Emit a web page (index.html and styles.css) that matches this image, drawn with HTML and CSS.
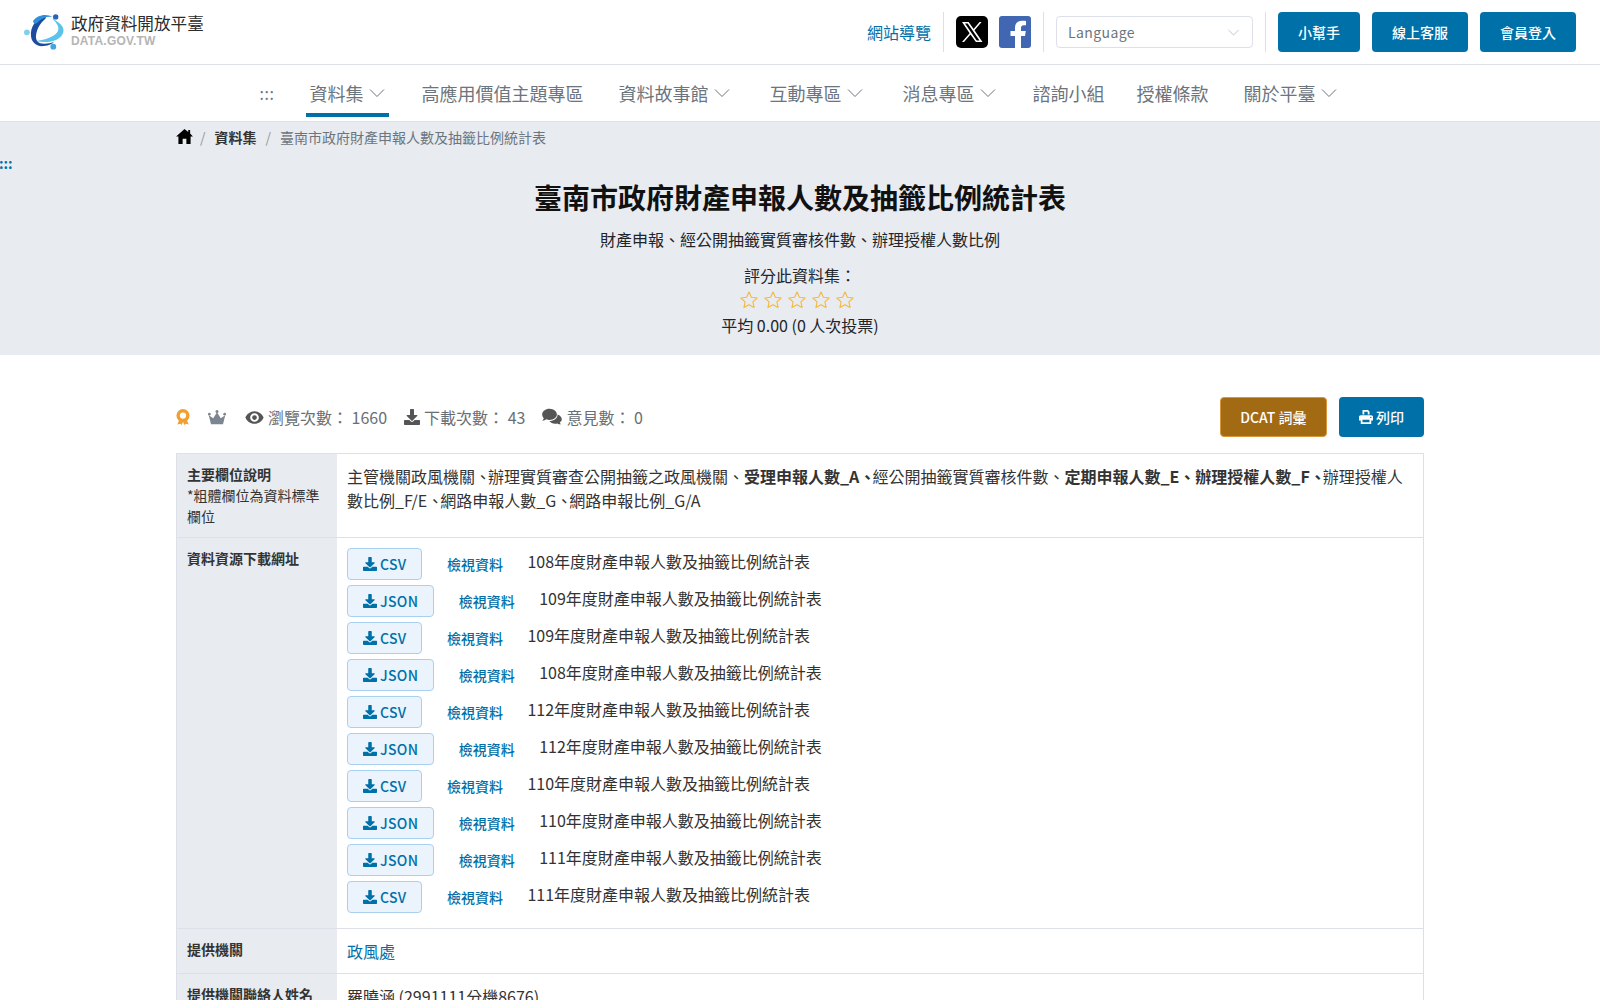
FILE: index.html
```html
<!DOCTYPE html>
<html lang="zh-TW">
<head>
  <meta charset="UTF-8" />
  <meta name="viewport" content="width=device-width, initial-scale=1.0"/>
  <title>臺南市政府財產申報人數及抽籤比例統計表 - 政府資料開放平臺</title>
  <link rel="stylesheet" href="styles.css">
</head>
<body>
  <svg class="icon-defs" width="0" height="0" aria-hidden="true">
    <symbol id="i-download" viewBox="0 0 512 512"><path d="M216 0h80c13 0 24 11 24 24v168h88c18 0 27 21 14 34L270 378c-8 8-20 8-28 0L90 226c-13-13-4-34 14-34h88V24c0-13 11-24 24-24zm296 376v112c0 13-11 24-24 24H24c-13 0-24-11-24-24V376c0-13 11-24 24-24h147l49 49c20 20 52 20 72 0l49-49h147c13 0 24 11 24 24z"/></symbol>
    <symbol id="i-chevron" viewBox="0 0 18 18"><path d="M2 5.500 9 12.500 16 5.500" fill="none" stroke="currentColor" stroke-width="1"/></symbol>
    <symbol id="i-star" viewBox="0 0 24 24"><path d="m12 2.500 2.900 6.300 6.900.8-5.100 4.700 1.400 6.800-6.100-3.400-6.100 3.400 1.400-6.800-5.100-4.700 6.900-.8z" fill="none" stroke="#f5b93a" stroke-width="1.300" stroke-linejoin="round"/></symbol>
  </svg>

  <header class="topbar">
    <a class="logo" href="#">
      <svg class="logo-mark" viewBox="0 0 42 38" width="42" height="38">
        <path d="M11 27C24 30 38 27 39.500 17 40 12 35 8 28 4.500 33 9 35.500 13 34 17 32 22 22 26 11 27z" fill="#5cc4ea"/>
        <path d="M20 1.500C12 5 6 13 7 22c.5 6 5 11 13 10 5-.5 8-2 10-4-6 2-14 3-17-1-3-5 1-16 7-21 2-1.500 3-3 0-4.500z" fill="#1c4c9e"/>
        <path d="M9 7c4-6 13-8 20-4-6-1-11 1-15 5-2 2-4 3-5-1z" fill="#2f8fd8"/>
        <circle cx="31.700" cy="2.900" r="2.700" fill="#2a62b5"/>
        <circle cx="2.900" cy="18.300" r="2.900" fill="#7fd0ee"/>
        <circle cx="29.300" cy="32.700" r="2.900" fill="#3fa6e0"/>
      </svg>
      <span class="logo-text">
        <span class="logo-name">政府資料開放平臺</span>
        <span class="logo-url">DATA.GOV.TW</span>
      </span>
    </a>
    <div class="topbar-right">
      <a class="sitemap" href="#">網站導覽</a>
      <span class="divider"></span>
      <a class="social" href="#" aria-label="X">
        <svg viewBox="0 0 32 32" width="32" height="32"><rect width="32" height="32" rx="5" fill="#000"/><path d="M6 6h6.600l5 7 6-7h2l-7.100 8.300L26.500 26h-6.600l-5.400-7.600L8 26H6l7.600-8.800zm3 1.500 11.700 17h2.800L11.700 7.500z" fill="#fff"/></svg>
      </a>
      <a class="social" href="#" aria-label="Facebook">
        <svg viewBox="0 0 32 32" width="32" height="32"><rect width="32" height="32" rx="3" fill="#4267b2"/><path d="M22 32V20h4l.8-5H22v-3c0-1.500.7-2.700 2.900-2.700H27V5c-1-.2-2.500-.3-4-.3-4.200 0-7 2.500-7 7V15h-4.500v5H16v12z" fill="#fff"/></svg>
      </a>
      <span class="divider"></span>
      <div class="lang-select">
        <span>Language</span>
        <svg width="13" height="13"><use href="#i-chevron"/></svg>
      </div>
      <span class="divider"></span>
      <div class="top-buttons">
        <a class="btn-primary" href="#">小幫手</a>
        <a class="btn-primary" href="#">線上客服</a>
        <a class="btn-primary" href="#">會員登入</a>
      </div>
    </div>
  </header>

  <nav class="mainnav">
    <a class="accesskey" href="#">:::</a>
    <a class="nav-item has-sub active" href="#">資料集<svg width="18" height="18"><use href="#i-chevron"/></svg></a>
    <a class="nav-item" href="#">高應用價值主題專區</a>
    <a class="nav-item has-sub" href="#">資料故事館<svg width="18" height="18"><use href="#i-chevron"/></svg></a>
    <a class="nav-item has-sub" href="#">互動專區<svg width="18" height="18"><use href="#i-chevron"/></svg></a>
    <a class="nav-item has-sub" href="#">消息專區<svg width="18" height="18"><use href="#i-chevron"/></svg></a>
    <a class="nav-item" href="#">諮詢小組</a>
    <a class="nav-item" href="#">授權條款</a>
    <a class="nav-item has-sub" href="#">關於平臺<svg width="18" height="18"><use href="#i-chevron"/></svg></a>
  </nav>

  <section class="hero">
    <div class="breadcrumb">
      <svg class="home" viewBox="0 0 576 512" width="17" height="15"><path d="M288 0 0 256h80v256h144V336h128v176h144V256h80L480 156V32h-64v68z"/></svg>
      <span class="sep">/</span>
      <a class="crumb" href="#">資料集</a>
      <span class="sep">/</span>
      <span class="crumb-current">臺南市政府財產申報人數及抽籤比例統計表</span>
    </div>
    <a class="accesskey-main" href="#">:::</a>
    <h1>臺南市政府財產申報人數及抽籤比例統計表</h1>
    <p class="subtitle">財產申報、經公開抽籤實質審核件數、辦理授權人數比例</p>
    <p class="rate-label">評分此資料集：</p>
    <div class="stars">
      <svg width="20" height="20"><use href="#i-star"/></svg>
      <svg width="20" height="20"><use href="#i-star"/></svg>
      <svg width="20" height="20"><use href="#i-star"/></svg>
      <svg width="20" height="20"><use href="#i-star"/></svg>
      <svg width="20" height="20"><use href="#i-star"/></svg>
    </div>
    <p class="rate-avg">平均 0.00 (0 人次投票)</p>
  </section>

  <main class="content">
    <div class="stats-row">
      <div class="stats">
        <svg class="stat-badge" viewBox="0 0 24 28" width="14" height="16"><circle cx="12" cy="11.500" r="8.500" fill="none" stroke="#f0a030" stroke-width="6"/><path d="m5 20-3 7 5-1 3 2 2-6zm14 0 3 7-5-1-3 2-2-6z" fill="#f0a030"/></svg>
        <svg class="stat-crown" viewBox="0 0 24 20" width="18" height="15"><path d="M4 19 1 7 7 11 12 3 17 11 23 7 20 19z" fill="#7d8590"/><circle cx="1.800" cy="5.500" r="1.800" fill="#7d8590"/><circle cx="12" cy="2" r="2" fill="#7d8590"/><circle cx="22.200" cy="5.500" r="1.800" fill="#7d8590"/></svg>
        <span class="stat stat-first"><svg viewBox="0 0 24 24" width="19" height="19"><path d="M12 4C6.500 4 2.200 7.800.5 12c1.700 4.200 6 8 11.500 8s9.800-3.800 11.500-8C21.800 7.800 17.500 4 12 4zm0 13.500a5.500 5.500 0 1 1 0-11 5.500 5.500 0 0 1 0 11zm0-8.500a3 3 0 1 0 0 6 3 3 0 0 0 0-6z" fill="#555"/></svg>瀏覽次數： 1660</span>
        <span class="stat"><svg width="16" height="16" fill="#555"><use href="#i-download"/></svg>下載次數： 43</span>
        <span class="stat"><svg viewBox="0 0 24 22" width="20" height="18"><path d="M9 1C4 1 0 4 0 8c0 1.800.8 3.400 2 4.600-.4 1.200-1.200 2.200-1.800 2.900 2 0 3.700-.8 4.800-1.600 1.200.4 2.600.7 4 .7 5 0 9-3 9-6.600S14 1 9 1z" fill="#555"/><path d="M24 14c0-2.700-2.200-5-5.200-6 .1 4.800-4.500 8-10 8 1.300 2 4 3.300 7 3.300 1 0 2-.2 3-.5.900.7 2.400 1.200 4.200 1.200-.5-.6-1.200-1.500-1.500-2.500 1.600-.9 2.500-2 2.500-3.500z" fill="#555"/></svg>意見數： 0</span>
      </div>
      <div class="stats-actions">
        <a class="btn-dcat" href="#">DCAT 詞彙</a>
        <a class="btn-primary btn-print" href="#">
          <svg viewBox="0 0 512 512" width="14" height="14" fill="#fff"><path d="M128 0h200l56 56v104h-64V64H192v96h-64zM64 192h384c35 0 64 29 64 64v128h-64v128H64V384H0V256c0-35 29-64 64-64zm64 224v32h256v-96H128zM432 248a24 24 0 1 0 0 48 24 24 0 0 0 0-48z"/></svg>列印
        </a>
      </div>
    </div>

    <div class="info-table">
      <div class="info-row">
        <div class="info-label"><strong>主要欄位說明</strong><span class="note">*粗體欄位為資料標準欄位</span></div>
        <div class="info-value">主管機關政風機關<span class="dun">、</span>辦理實質審查公開抽籤之政風機關、<b>受理申報人數_A<span class="dun">、</span></b>經公開抽籤實質審核件數、<b>定期申報人數_E、辦理授權人數_F<span class="dun">、</span></b>辦理授權人數比例_F/E<span class="dun">、</span>網路申報人數_G<span class="dun">、</span>網路申報比例_G/A</div>
      </div>
      <div class="info-row">
        <div class="info-label"><strong>資料資源下載網址</strong></div>
        <div class="info-value resources" id="resources"></div>
      </div>
      <div class="info-row">
        <div class="info-label"><strong>提供機關</strong></div>
        <div class="info-value"><a class="link" href="#">政風處</a></div>
      </div>
      <div class="info-row">
        <div class="info-label"><strong>提供機關聯絡人姓名</strong></div>
        <div class="info-value">羅曉涵 (2991111分機8676)</div>
      </div>
    </div>
  </main>

  <script>
    const recursos = [
      ['CSV', 108], ['JSON', 109], ['CSV', 109], ['JSON', 108], ['CSV', 112],
      ['JSON', 112], ['CSV', 110], ['JSON', 110], ['JSON', 111], ['CSV', 111]
    ];
    const lista = document.getElementById('resources');

    recursos.forEach(([formato, ano]) => {
      const linha = document.createElement('div');
      linha.className = 'resource';
      linha.innerHTML = `
        <a class="btn-file" href="#"><svg width="14" height="14" fill="currentColor"><use href="#i-download"/></svg>${formato}</a>
        <a class="view-link" href="#">檢視資料</a>
        <span>${ano}年度財產申報人數及抽籤比例統計表</span>
      `;
      lista.appendChild(linha);
    });
  </script>
</body>
</html>
```

FILE: styles.css
```css
:root {
  --primary: #0070a8;
  --bg-soft: #e8ebf0;
  --line: #dde0e8;
  --text: #333;
  --gray: #6c757d;
}

* {
  margin: 0;
  padding: 0;
  box-sizing: border-box;
}

html {
  scrollbar-width: none;
}

body {
  font-family: "Noto Sans CJK TC", "Noto Sans", sans-serif;
  font-size: 16px;
  line-height: 24px;
  color: var(--text);
  background-color: #fff;
}

a {
  text-decoration: none;
  color: inherit;
}

.icon-defs {
  position: absolute;
}

/* topo */
.topbar {
  height: 65px;
  padding: 0 24px;
  border-bottom: 1px solid var(--line);
  display: flex;
  justify-content: space-between;
  align-items: flex-start;
}

.logo {
  display: flex;
  align-items: flex-start;
  gap: 5px;
  padding-top: 13px;
}

.logo-text {
  display: flex;
  flex-direction: column;
}

.logo-name {
  font-size: 16.600px;
  line-height: 20px;
  color: #2b2b2b;
  white-space: nowrap;
}

.logo-url {
  font-family: "Liberation Sans", sans-serif;
  font-weight: bold;
  font-size: 12px;
  line-height: 14px;
  margin-top: 1px;
  color: #b5b5b5;
  letter-spacing: 0.2px;
}

.logo-mark {
  margin-top: 1px;
}

.topbar-right {
  display: flex;
  align-items: center;
  padding-top: 12px;
  height: 52px;
}

.sitemap {
  color: var(--primary);
  margin-right: 12px;
}

.divider {
  width: 1px;
  height: 40px;
  background-color: var(--line);
}

.social {
  display: flex;
  margin-left: 12px;
}

.social + .social {
  margin-left: 11px;
}

.social + .divider {
  margin-left: 12px;
}

.lang-select {
  width: 197px;
  height: 32px;
  margin: 0 12px;
  padding: 0 12px 0 11px;
  border: 1px solid var(--line);
  border-radius: 4px;
  color: var(--gray);
  font-size: 14px;
  letter-spacing: 0.4px;
  display: flex;
  justify-content: space-between;
  align-items: center;
}

.lang-select svg {
  color: #aab0b8;
}

.top-buttons {
  display: flex;
  gap: 12px;
  margin-left: 12px;
}

.btn-primary {
  background-color: var(--primary);
  color: #fff;
  font-size: 14px;
  font-weight: 500;
  height: 40px;
  padding: 0 20px;
  border-radius: 4px;
  display: flex;
  align-items: center;
  justify-content: center;
}

/* menu */
.mainnav {
  height: 57px;
  padding-right: 1px;
  border-bottom: 1px solid var(--line);
  display: flex;
  justify-content: center;
  align-items: flex-start;
  gap: 32px;
  color: var(--gray);
}

.accesskey {
  font-size: 16px;
  line-height: 56px;
  letter-spacing: 0.500px;
  margin-left: 2px;
}

.nav-item {
  font-size: 18px;
  line-height: 27px;
  height: 53px;
  padding-top: 15px;
  display: flex;
  gap: 5px;
}

.nav-item.has-sub {
  padding: 15px 3px 0;
}

.nav-item svg {
  margin-top: 4px;
}

.nav-item.active {
  border-bottom: 4px solid var(--primary);
  height: 52px;
}

/* faixa do titulo */
.hero {
  background-color: var(--bg-soft);
  height: 233px;
  text-align: center;
  color: #212529;
}

.breadcrumb {
  width: 1248px;
  margin: 0 auto;
  height: 30px;
  font-size: 14px;
  line-height: 30px;
  display: flex;
  align-items: center;
  gap: 9px;
}

.home {
  fill: #000;
  margin: 0 -2px 2px 0;
}

.sep {
  color: #999;
}

.crumb {
  font-weight: 700;
  color: #333;
}

.crumb-current {
  color: var(--gray);
}

.accesskey-main {
  display: block;
  width: 12px;
  height: 22px;
  font-size: 14px;
  font-weight: 700;
  line-height: 22px;
  color: var(--primary);
  text-align: left;
  margin-left: -1px;
}

h1 {
  font-size: 28px;
  font-weight: 700;
  line-height: 42px;
  margin-top: 2px;
  color: #111;
}

.subtitle {
  margin-top: 9px;
  line-height: 24px;
}

.rate-label {
  margin-top: 12px;
}

.stars {
  display: flex;
  justify-content: center;
  gap: 4px;
  height: 24px;
  margin-top: 1px;
  padding-right: 6px;
  align-items: center;
}

.rate-avg {
  margin-top: 1px;
}

/* conteudo */
.content {
  width: 1248px;
  margin: 0 auto;
  padding-top: 42px;
}

.stats-row {
  display: flex;
  justify-content: space-between;
  align-items: center;
  height: 40px;
}

.stats {
  display: flex;
  align-items: center;
  color: #6a6f75;
}

.stat-crown {
  margin-left: 18px;
}

.stat {
  display: flex;
  align-items: center;
  gap: 4px;
  margin-left: 17px;
  white-space: pre;
}

.stat-first {
  margin-left: 19px;
}

.stats-actions {
  display: flex;
  gap: 12px;
}

.btn-dcat {
  background-color: #a36a14;
  border: 1px solid #d9953a;
  color: #fff;
  font-size: 14px;
  font-weight: 500;
  height: 40px;
  padding: 0 19.500px;
  border-radius: 4px;
  display: flex;
  align-items: center;
}

.btn-print {
  gap: 3px;
}

.info-table {
  margin-top: 16px;
  border: 1px solid var(--line);
  border-bottom: none;
}

.info-row {
  display: grid;
  grid-template-columns: 160px 1fr;
  border-bottom: 1px solid var(--line);
}

.info-label {
  background-color: var(--bg-soft);
  padding: 10px;
  font-size: 14px;
  line-height: 21px;
}

.info-label strong {
  display: block;
  font-weight: 700;
}

.note {
  display: block;
}

.info-value {
  padding: 10px;
  line-height: 24px;
}

.dun {
  letter-spacing: -3px;
}

.link {
  color: var(--primary);
}

.resources {
  display: flex;
  flex-direction: column;
  gap: 5px;
  padding-bottom: 15px;
}

.resource {
  display: flex;
  align-items: flex-start;
  height: 32px;
}

.btn-file {
  display: flex;
  align-items: center;
  justify-content: center;
  gap: 3px;
  height: 32px;
  padding: 0 15px;
  color: var(--primary);
  background-color: #ebf3fd;
  border: 1px solid #a8d0f0;
  border-radius: 4px;
  font-size: 14px;
  font-weight: 500;
  letter-spacing: 0.300px;
}

.view-link {
  margin-left: 24.500px;
  margin-top: 4px;
  color: var(--primary);
  font-size: 14px;
  font-weight: 500;
}

.resource span {
  margin-left: 24.500px;
  margin-top: 1px;
}
```
